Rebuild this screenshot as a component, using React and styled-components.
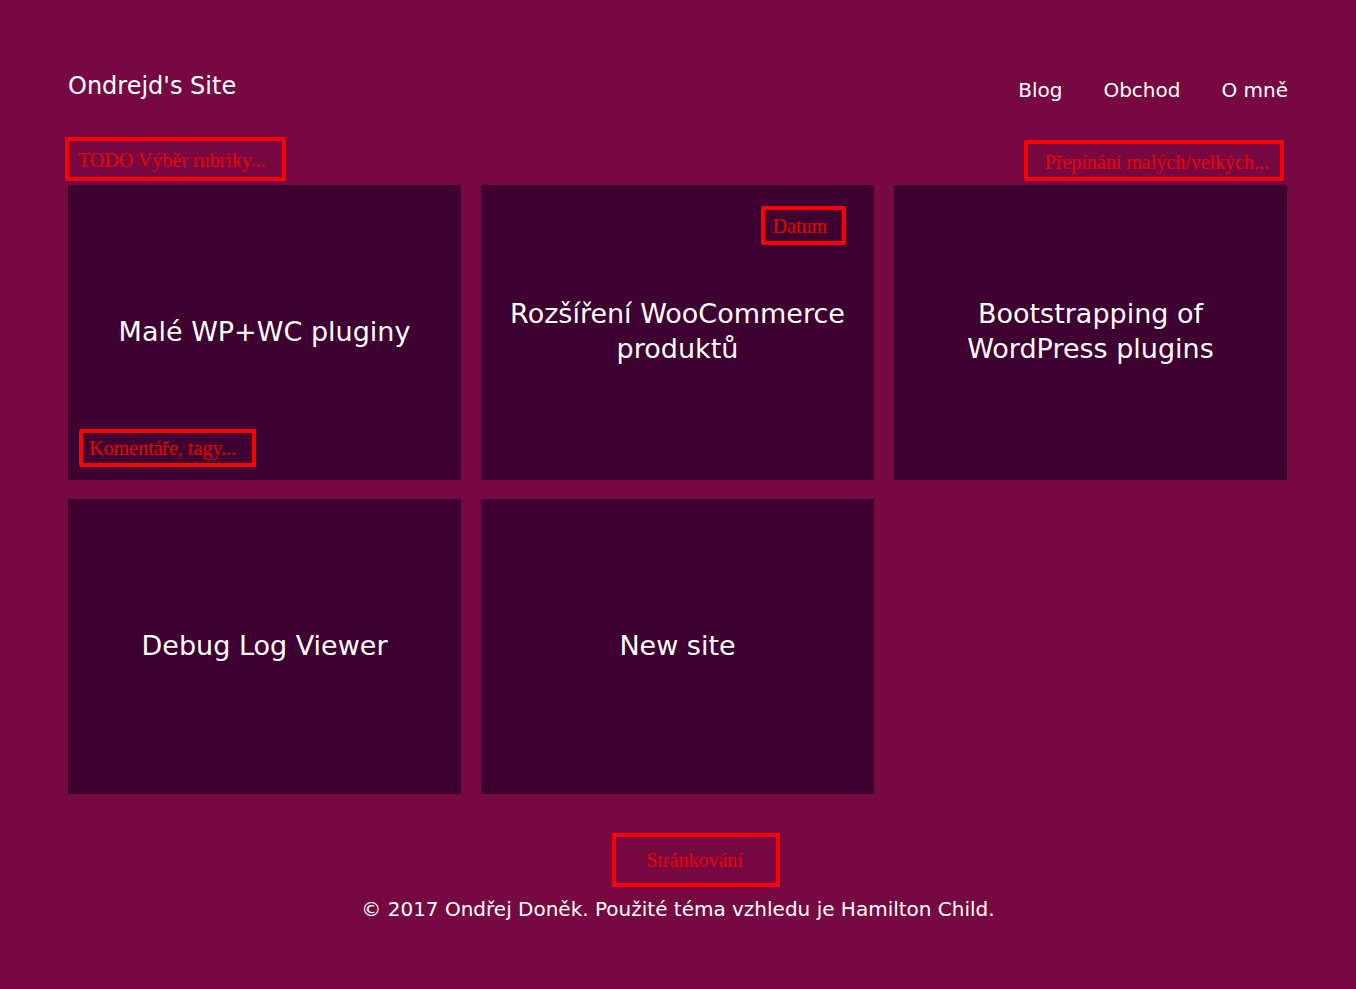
import React from 'react';
import styled, { createGlobalStyle } from 'styled-components';

const GlobalStyle = createGlobalStyle`
    body {
        margin: 0;
        background: #770942;
        font-family: "DejaVu Sans", Verdana, sans-serif;
        color: #fff;
    }
`;

const Page = styled.div`
    min-height: 100vh;
    width: 1220px;
    margin: 0 auto;
    padding-top: 71px;
    box-sizing: border-box;
`;

const Header = styled.header`
    display: flex;
    justify-content: space-between;
    align-items: flex-start;
    height: 65px;
`;

const SiteTitle = styled.div`
    font-size: 24px;
    line-height: 30px;
`;

const Nav = styled.nav`
    display: flex;
    gap: 41px;
    padding-top: 6px;
`;

const NavLink = styled.a`
    color: #fff;
    text-decoration: none;
    font-size: 20px;
    line-height: 26px;
`;

const Toolbar = styled.div`
    display: flex;
    justify-content: space-between;
    align-items: flex-end;
    margin: 0 4px 4px -3px;
    height: 45px;
`;

const Todo = styled.div`
    border: 4px solid #ff0000;
    border-radius: 2px;
    color: #ee0000;
    font-family: "Liberation Serif", "Times New Roman", serif;
    font-size: 20px;
    line-height: 22px;
    padding: ${p => p.pad};
    white-space: nowrap;
`;

const Grid = styled.div`
    display: grid;
    grid-template-columns: repeat(3, 393px);
    grid-auto-rows: 295px;
    column-gap: 20px;
    row-gap: 19px;
`;

const Card = styled.article`
    position: relative;
    background: #3d0030;
    display: flex;
    align-items: center;
    justify-content: center;
    text-align: center;
    padding: 0 20px 3px;
`;

const CardTitle = styled.h2`
    margin: 0;
    font-weight: normal;
    font-size: 27px;
    line-height: 35px;
`;

const Corner = styled.div`
    position: absolute;
    ${p => p.top !== undefined && `top: ${p.top}px;`}
    ${p => p.bottom !== undefined && `bottom: ${p.bottom}px;`}
    ${p => p.left !== undefined && `left: ${p.left}px;`}
    ${p => p.right !== undefined && `right: ${p.right}px;`}
`;

const Footer = styled.footer`
    display: flex;
    flex-direction: column;
    align-items: center;
    padding-top: 39px;
`;

const Pager = styled(Todo)`
    margin-left: 36px;
`;

const Copyright = styled.p`
    margin: 9px 0 0;
    font-size: 20px;
    line-height: 26px;
`;

const posts = [
    { title: 'Malé WP+WC pluginy', comments: true },
    { title: 'Rozšíření WooCommerce produktů', date: true },
    { title: 'Bootstrapping of WordPress plugins' },
    { title: 'Debug Log Viewer' },
    { title: 'New site' },
];

const App = () => (
    <>
        <GlobalStyle />
        <Page>
            <Header>
                <SiteTitle>Ondrejd's Site</SiteTitle>
                <Nav>
                    <NavLink href="#">Blog</NavLink>
                    <NavLink href="#">Obchod</NavLink>
                    <NavLink href="#">O mně</NavLink>
                </Nav>
            </Header>
            <Toolbar>
                <Todo pad="8px 17px 6px 9px">TODO Výběr rubriky...</Todo>
                <Todo pad="7px 11px 4px 17px">Přepínání malých/velkých...</Todo>
            </Toolbar>
            <Grid>
                {posts.map((post) => (
                    <Card key={post.title}>
                        <CardTitle>{post.title}</CardTitle>
                        {post.date && (
                            <Corner top={21} right={28}>
                                <Todo pad="5px 15px 4px 8px">Datum</Todo>
                            </Corner>
                        )}
                        {post.comments && (
                            <Corner bottom={13} left={11}>
                                <Todo pad="4px 16px 4px 6px">Komentáře, tagy...</Todo>
                            </Corner>
                        )}
                    </Card>
                ))}
            </Grid>
            <Footer>
                <Pager pad="12px 33px 12px 30px">Stránkování</Pager>
                <Copyright>© 2017 Ondřej Doněk. Použité téma vzhledu je Hamilton Child.</Copyright>
            </Footer>
        </Page>
    </>
);

export default App;
